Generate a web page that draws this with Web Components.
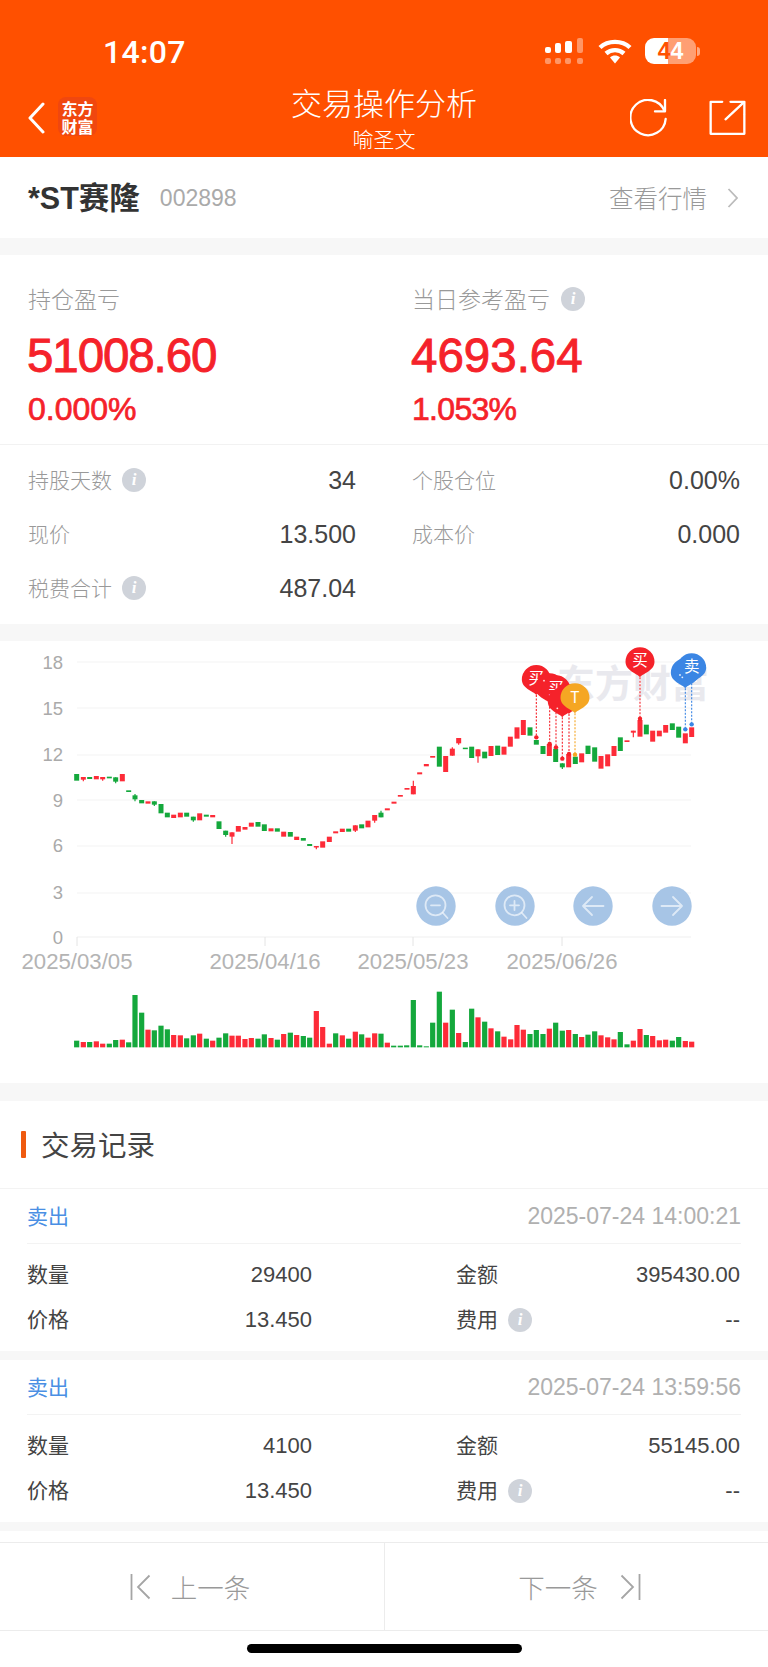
<!DOCTYPE html>
<html lang="zh-CN">
<head>
<meta charset="utf-8">
<title>交易操作分析</title>
<style>
html,body{margin:0;padding:0;background:#f7f7f7}
body{width:768px;height:1667px;overflow:hidden;display:flex;flex-direction:column;font-family:"Liberation Sans","Noto Sans CJK SC",sans-serif;-webkit-font-smoothing:antialiased}
</style>
</head>
<body>
<app-header></app-header>
<stock-row name="*ST赛隆" code="002898" link="查看行情"></stock-row>
<pnl-card></pnl-card>
<kline-chart></kline-chart>
<record-title>交易记录</record-title>
<trade-record side="卖出" time="2025-07-24 14:00:21" qty="29400" amount="395430.00" price="13.450" fee="--"></trade-record>
<trade-record side="卖出" time="2025-07-24 13:59:56" qty="4100" amount="55145.00" price="13.450" fee="--"></trade-record>
<spacer-white></spacer-white>
<pager-bar></pager-bar>
<home-bar></home-bar>

<script>
const FONT='"Liberation Sans","Noto Sans CJK SC",sans-serif';
function def(name,html,init){
  customElements.define(name,class extends HTMLElement{
    constructor(){super();this.attachShadow({mode:'open'});}
    connectedCallback(){
      this.shadowRoot.innerHTML=typeof html==='function'?html(this):html;
      if(init)init(this);
    }
  });
}

def('info-dot',`<style>
:host{display:inline-flex;width:24px;height:24px;border-radius:50%;background:#cfd3da;align-items:center;justify-content:center;flex:none}
span{color:#fff;font:italic 700 17px/24px "Liberation Serif",serif}
</style><span>i</span>`);

def('app-header',`<style>
:host{display:block;height:157px;background:#ff5000;color:#fff;box-sizing:border-box;flex:none}
.status{height:85px;display:flex;align-items:flex-start;padding:0 68px 0 103px;justify-content:space-between}
.time{font:500 32px/34px Roboto,"Liberation Sans",sans-serif;margin-top:35px;letter-spacing:.3px}
.ind{display:flex;align-items:flex-start;margin-top:38px}
.sig{width:38px;height:26px;display:block;margin-right:15px}
.wifi{width:34px;height:26px;display:block;margin-right:13px}
.bat{display:flex;align-items:center}
.cell{width:51px;height:26px;border-radius:9px;background:linear-gradient(90deg,#fff 0 23px,rgba(255,255,255,.45) 23px);display:flex;justify-content:center;align-items:center;font:700 23px/26px "Liberation Sans",sans-serif}
.d1{color:#ff5000}.d2{color:#fff}
.nub{width:3px;height:9px;background:rgba(255,255,255,.5);border-radius:0 3px 3px 0;margin-left:1px}
.nav{height:72px;display:grid;grid-template-columns:1fr auto 1fr}
.left{display:flex;align-items:flex-start;padding-left:27px}
.back{width:18px;height:32px;margin-top:17px;display:block}
.logo{margin:12px 0 0 13px;width:39px;height:39px;background:#f0470f;border-radius:8px;font:700 16px/18px "Noto Sans CJK SC",sans-serif;text-align:center;padding-top:2px;box-sizing:border-box}
.mid{text-align:center}
.t{font:300 31px/36px "Noto Sans CJK SC",sans-serif;margin-top:-1px}
.s{font:300 21px/26px "Noto Sans CJK SC",sans-serif;margin-top:5px}
.right{display:flex;justify-content:flex-end;align-items:flex-start;padding-right:22px;padding-top:14px}
.refresh{width:37px;height:39px;display:block;margin-right:42px}
.share{width:37px;height:36px;display:block;margin-top:1px}
</style>
<div class="status">
  <div class="time">14:07</div>
  <div class="ind">
    <svg class="sig" viewBox="0 0 38 26"><g fill="#fff"><rect x="0" y="9" width="6" height="6" rx="2"/><rect x="10" y="5" width="6" height="10" rx="2"/><rect x="20" y="3" width="7" height="12" rx="2"/></g><rect x="32" y="0" width="6" height="15" rx="2" fill="#fff" fill-opacity=".4"/><g fill="#fff" fill-opacity=".4"><rect x="0" y="20" width="6" height="6" rx="2"/><rect x="10" y="20" width="6" height="6" rx="2"/><rect x="20" y="20" width="6" height="6" rx="2"/><rect x="32" y="20" width="6" height="6" rx="2"/></g></svg>
    <svg class="wifi" viewBox="0 0 34 26"><g fill="none" stroke="#fff" stroke-width="4.4"><path d="M2 9.5C10 2 24 2 32 9.5"/><path d="M8 15.5C13 11 21 11 26 15.5"/></g><path d="M12 19.4C15 17 19 17 22 19.4L17 25.5Z" fill="#fff"/></svg>
    <div class="bat"><div class="cell"><span class="d1">4</span><span class="d2">4</span></div><div class="nub"></div></div>
  </div>
</div>
<div class="nav">
  <div class="left">
    <svg class="back" viewBox="0 0 18 32"><path d="M16 2L3 16L16 30" fill="none" stroke="#fff" stroke-width="3" stroke-linecap="round" stroke-linejoin="round"/></svg>
    <div class="logo">东方<br>财富</div>
  </div>
  <div class="mid"><div class="t">交易操作分析</div><div class="s">喻圣文</div></div>
  <div class="right">
    <svg class="refresh" viewBox="30 27 111 117"><g fill="none" stroke="#fff" stroke-width="7" stroke-linecap="round" stroke-linejoin="round"><path d="M137 87A53 53 0 1 1 133 62"/><path d="M135 30V64H105"/></g></svg>
    <svg class="share" viewBox="265 30 112 108"><g fill="none" stroke="#fff" stroke-width="7" stroke-linecap="round" stroke-linejoin="round"><path d="M305 35H270V132H372V75"/><path d="M315 88L371 36"/><path d="M330 35H372V72"/></g></svg>
  </div>
</div>`);

def('stock-row',h=>`<style>
:host{display:flex;height:81px;background:#fff;align-items:center;padding:0 30px 0 28px;flex:none;box-sizing:border-box}
.n{font:700 30.500px/40px ${FONT};color:#333}
.c{font:400 23px/40px ${FONT};color:#aaa;margin-left:20px}
.sp{flex:1}
.l{font:300 24.500px/40px "Noto Sans CJK SC",sans-serif;color:#999}
svg{width:11px;height:20px;margin-left:20px;display:block}
</style><span class="n">${h.getAttribute('name')}</span><span class="c">${h.getAttribute('code')}</span><span class="sp"></span><span class="l">${h.getAttribute('link')}</span><svg viewBox="0 0 11 20"><path d="M1.500 1L10 10L1.500 19" fill="none" stroke="#bbb" stroke-width="1.800"/></svg>`);

def('pnl-metric',h=>`<style>
:host{display:block}
.lb{display:flex;align-items:center;gap:11px;height:28px;font:300 23px/28px "Noto Sans CJK SC",sans-serif;color:#999}
.lb span{margin-top:-3px}
.v{font:400 47.500px/50px ${FONT};-webkit-text-stroke:.9px #f5222a;color:#f5222a;margin-top:18px;margin-left:-1px;letter-spacing:${h.getAttribute('ls')||0}px}
.p{font:400 32px/36px ${FONT};-webkit-text-stroke:.7px #f5222a;color:#f5222a;margin-top:10px;letter-spacing:${h.getAttribute('pls')||0}px}
</style><div class="lb"><span>${h.getAttribute('label')}</span>${h.hasAttribute('info')?'<info-dot></info-dot>':''}</div><div class="v">${h.getAttribute('value')}</div><div class="p">${h.getAttribute('pct')}</div>`);

def('kv-row',h=>`<style>
:host{display:flex;align-items:center;height:54px}
.k{font:300 21px/28px "Noto Sans CJK SC",sans-serif;color:#999;margin-top:-2px}
info-dot{margin-left:10px}
.sp{flex:1}
.v{font:400 25px/28px ${FONT};color:#444}
</style><span class="k">${h.getAttribute('k')}</span>${h.hasAttribute('info')?'<info-dot></info-dot>':''}<span class="sp"></span><span class="v">${h.getAttribute('v')||''}</span>`);

def('pnl-card',`<style>
:host{display:block;background:#fff;margin-top:17px;height:369px;flex:none}
.top{display:grid;grid-template-columns:328px 328px;column-gap:56px;padding:30px 28px 18px;height:190px;box-sizing:border-box;border-bottom:1px solid #f2f2f2}
.rows{display:grid;grid-template-columns:328px 328px;column-gap:56px;padding:8px 28px;grid-auto-rows:54px}
</style>
<div class="top">
  <pnl-metric label="持仓盈亏" value="51008.60" pct="0.000%" ls="-1.1"></pnl-metric>
  <pnl-metric label="当日参考盈亏" value="4693.64" pct="1.053%" pls="-.7" info></pnl-metric>
</div>
<div class="rows">
  <kv-row k="持股天数" v="34" info></kv-row><kv-row k="个股仓位" v="0.00%"></kv-row>
  <kv-row k="现价" v="13.500"></kv-row><kv-row k="成本价" v="0.000"></kv-row>
  <kv-row k="税费合计" v="487.04" info></kv-row><span></span>
</div>`);

const R='#fd2b38',G='#14a83c';
/* [x, top, bottom, colour, wickTop, wickBottom] in 3x crop units */
const candles=[
[230,402,422,G],[250,411,419,R,0,424],[269,411,417,G],[289,408,418,R],[308,411,418,R,0,422],[328,410,415,G],[347,412,425,G,0,430],[367,402,424,R],
[386,451,456,G],[405,466,478,G,462,484],[425,480,490,G],[444,484,491,R],[463,484,494,G,0,498],[483,492,520,G],[502,518,532,G],[521,524,534,R],[541,518,532,R],[560,518,530,G],[580,530,541,G,0,545],[599,520,541,R],[619,524,530,G],[638,525,532,R],
[657,544,567,G],[677,572,585,G,0,590],[696,577,590,R,0,612],[715,558,575,R],[735,561,569,R],[754,548,560,R],[774,546,560,G],[793,553,573,G],[813,565,574,R],[832,565,575,G],[851,575,590,R],[871,576,590,G],[890,590,600,R],[910,594,602,G],[929,612,618,G],[949,618,622,R,0,628],[968,604,623,R],[988,590,606,R],[1007,574,580,R],[1027,566,576,R],[1046,566,575,G],[1066,556,572,R,0,576],[1085,553,565,G],[1104,542,562,R],[1124,525,542,R,0,548],[1143,518,532,G,512],
[1162,505,511,R],[1182,485,491,R],[1201,465,470,R],[1221,444,449,R],[1240,438,463,R,422],[1259,397,403,R],[1279,372,379,R],[1298,348,353,R],[1318,320,380,G],[1337,348,396,R],[1357,326,347,R,322],[1376,294,310,R,0,314],[1396,323,327,G],[1415,320,354,G],[1434,328,349,R,0,368],[1454,335,355,G],[1473,318,348,R],[1493,317,345,G],[1512,320,344,R],[1531,290,320,R],[1551,262,296,R],[1570,240,285,R],[1590,262,287,G],[1609,300,314,G],[1629,318,342,G],[1648,312,348,R],[1667,326,366,G],[1687,370,382,G,0,387],[1706,342,382,R],[1726,350,372,G],[1745,340,367,R],[1764,317,342,G],[1784,322,365,G],[1803,348,386,R],[1823,343,379,R],[1842,318,348,R],[1861,292,333,G],[1881,301,306,R],[1900,272,278,R,0,292],[1920,240,290,R],[1939,254,283,G],[1958,272,305,R],[1978,272,289,R],[1997,255,278,R],[2017,250,270,G],[2036,260,293,G],[2056,280,310,R],[2075,262,291,R]];
const vols=[[230,242,G],[250,246,R],[269,246,G],[289,244,R],[308,251,R],[328,251,G],[347,240,G],[367,239,R],[386,247,G],[405,105,G],[425,158,G],[444,209,R],[463,211,G],[483,197,G],[502,208,G],[521,225,R],[541,226,R],[560,235,G],[580,226,G],[599,221,R],[619,236,G],[638,242,R],[657,233,G],[677,220,G],[696,227,R],[715,227,R],[735,237,R],[754,234,R],[774,236,G],[793,223,G],[813,234,R],[832,239,G],[851,222,R],[871,218,G],[890,225,R],[910,228,G],[929,233,G],[949,153,R],[968,201,R],[988,251,R],[1007,220,G],[1027,226,R],[1046,236,G],[1066,215,R],[1085,223,G],[1104,233,R],[1124,220,R],[1143,221,G],
[1162,248,R],[1181,257,G],[1201,257,G],[1220,256,G],[1240,120,G],[1259,256,G],[1279,259,G],[1298,188,G],[1318,95,G],[1337,188,R],[1357,149,G],[1376,219,R],[1396,246,G],[1415,146,G],[1434,172,R],[1454,185,G],[1473,205,R],[1493,214,G],[1512,230,R],[1532,238,R],[1551,195,R],[1570,209,R],[1590,222,G],[1609,210,G],[1629,222,G],[1648,206,R],[1667,188,G],[1687,212,G],[1706,210,R],[1726,222,G],[1745,231,R],[1764,224,G],[1784,214,G],[1803,226,R],[1823,232,R],[1842,238,R],[1861,216,G],[1881,253,G],[1900,242,R],[1920,207,R],[1939,225,G],[1958,228,R],[1978,241,R],[1997,239,R],[2017,242,G],[2036,231,G],[2056,243,R],[2075,245,R]];
const PR='#f5222a',PB='#3b86e4',PO='#f5a623';
/* pin: x, tip y, marker y, colour, label (hidden labels are left out) */
const pins=[[1609,165,292,PR,'买'],[1649,190,312,PR,''],[1668,196,322,PR,'买'],[1707,222,342,PR,''],[1687,232,356,PR,''],[1725,220,344,PO,'T'],[1920,112,236,PR,'买'],[2056,145,268,PB,''],[2075,130,253,PB,'卖']];
const flecks=[[1632,122],[1672,205],[2040,105],[2047,112]];
function Y(z){return +(640+z/3).toFixed(2)}
function X(z){return +(z/3).toFixed(2)}
function chartSvg(){
  let s='';
  [662,708,755,800,846,893].forEach(y=>s+=`<line x1="77" x2="691" y1="${y}" y2="${y}" stroke="#f4f4f4" stroke-width="1.200"/>`);
  s+=`<line x1="77" x2="691" y1="937" y2="937" stroke="#efefef" stroke-width="1.200"/>`;
  [77,265,413,562].forEach(x=>s+=`<line x1="${x}" x2="${x}" y1="937" y2="946" stroke="#e4e4e4"/>`);
  [['18',662],['15',708],['12',754],['9',800],['6',845],['3',892],['0',937]].forEach(([t,y])=>s+=`<text x="63" y="${y+6.500}" text-anchor="end" class="ax">${t}</text>`);
  [['2025/03/05',77],['2025/04/16',265],['2025/05/23',413],['2025/06/26',562]].forEach(([t,x])=>s+=`<text x="${x}" y="969" text-anchor="middle" class="dt">${t}</text>`);
  s+=`<text x="557" y="697" class="wm">东方财富</text>`;
  candles.forEach(([x,t,b,c,wt,wb])=>{
    const px=X(x);
    if(wt||wb)s+=`<line x1="${px}" x2="${px}" y1="${Y(wt||t)}" y2="${Y(wb||b)}" stroke="${c}" stroke-width="1.200"/>`;
    s+=`<rect x="${px-2.500}" y="${Y(t)}" width="5" height="${Math.max(1.500,(b-t)/3).toFixed(2)}" fill="${c}"/>`;
  });
  vols.forEach(([x,t,c])=>s+=`<rect x="${X(x)-2.600}" y="${+(960+t/3).toFixed(2)}" width="5.200" height="${+((262-t)/3).toFixed(2)}" fill="${c}"/>`);
  pins.forEach(([x,tip,end,col])=>{
    s+=`<line x1="${X(x)}" x2="${X(x)}" y1="${Y(tip)}" y2="${Y(end)}" stroke="${col}" stroke-width="1.100" stroke-dasharray="2 1.500"/><circle cx="${X(x)}" cy="${Y(end)}" r="2.200" fill="${col}"/>`;
  });
  pins.forEach(([x,tip,end,col,lb])=>{
    const cx=X(x),ty=Y(tip),cy=ty-15.500,r=14.500;
    s+=`<path d="M${cx} ${ty}C${cx-3} ${ty-4} ${cx-r} ${cy+9} ${cx-r} ${cy}A${r} ${r} 0 1 1 ${cx+r} ${cy}C${cx+r} ${cy+9} ${cx+3} ${ty-4} ${cx} ${ty}Z" fill="${col}"/>`;
    if(lb)s+=`<text x="${cx}" y="${cy+(lb==='T'?5.500:4.500)}" text-anchor="middle" class="pn">${lb}</text>`;
  });
  flecks.forEach(([x,y])=>s+=`<circle cx="${X(x)}" cy="${Y(y)}" r=".9" fill="#fff" fill-opacity=".85"/>`);
  const btn=(cx,ic)=>`<circle cx="${cx}" cy="906" r="19.700" fill="#a7c5e6"/><g fill="none" stroke="#fff" stroke-opacity=".62" stroke-width="1.800" stroke-linecap="round" stroke-linejoin="round">${ic}</g>`;
  s+=btn(436,`<circle cx="435.500" cy="905.300" r="10"/><path d="M431 905.300H440M443 913L447.500 918"/>`);
  s+=btn(515,`<circle cx="514.500" cy="905.300" r="10"/><path d="M510 905.300H519M514.500 901V910M522 913L526.500 918"/>`);
  s+=btn(593,`<path d="M603.500 906H583M592 897L583 906L592 915"/>`);
  s+=btn(672,`<path d="M661.500 906H682M673 897L682 906L673 915"/>`);
  return s;
}
def('kline-chart',`<style>
:host{display:block;background:#fff;margin-top:17px;height:442px;flex:none}
svg{display:block;width:768px;height:442px}
.ax{font:400 18.500px "Liberation Sans",sans-serif;fill:#aaa}
.dt{font:400 22.200px "Liberation Sans",sans-serif;fill:#b4b4b4}
.wm{font:700 38px "Noto Sans CJK SC",sans-serif;fill:#e9e9ee}
.pn{font:400 15.500px "Noto Sans CJK SC",sans-serif;fill:#fff}
</style><svg viewBox="0 641 768 442">${chartSvg()}</svg>`);

def('record-title',`<style>
:host{display:flex;align-items:center;height:88px;background:#fff;margin-top:18px;flex:none;box-sizing:border-box;border-bottom:1px solid #f3f3f3;padding:0 0 0 21px}
i{width:5px;height:27px;background:#ef5a0f;border-radius:1px;margin:-1px 15px 0 0}
span{font:400 28.500px/40px "Noto Sans CJK SC",sans-serif;color:#444;margin-top:-2px}
</style><i></i><span><slot></slot></span>`);

def('trade-record',h=>`<style>
:host{display:block;background:#fff;flex:none;margin-bottom:9px;height:162px;box-sizing:border-box}
.head{height:54px;margin:0 27px;display:flex;align-items:center;justify-content:space-between;border-bottom:1px solid #f3f3f3}
.side{font:400 21px/28px "Noto Sans CJK SC",sans-serif;color:#4a8fe4;margin-top:-3px}
.time{font:400 23px/28px "Liberation Sans",sans-serif;color:#b0b0b0}
.grid{display:grid;grid-template-columns:285px 284px;column-gap:144px;padding:8px 27px;grid-auto-rows:45px}
.c{display:flex;align-items:center}
.k{font:400 21px/28px "Noto Sans CJK SC",sans-serif;color:#444;margin-top:-3px}
.v{margin-left:auto;font:400 22px/28px "Liberation Sans",sans-serif;color:#444}
info-dot{margin-left:10px}
</style>
<div class="head"><span class="side">${h.getAttribute('side')}</span><span class="time">${h.getAttribute('time')}</span></div>
<div class="grid">
  <div class="c"><span class="k">数量</span><span class="v">${h.getAttribute('qty')}</span></div>
  <div class="c"><span class="k">金额</span><span class="v">${h.getAttribute('amount')}</span></div>
  <div class="c"><span class="k">价格</span><span class="v">${h.getAttribute('price')}</span></div>
  <div class="c"><span class="k">费用</span><info-dot></info-dot><span class="v">${h.getAttribute('fee')}</span></div>
</div>`);

def('spacer-white',`<style>:host{display:block;height:11px;background:#fff;flex:none}</style>`);

def('pager-bar',`<style>
:host{display:grid;grid-template-columns:385px 1fr;height:89px;background:#fff;border-top:1px solid #ececec;border-bottom:1px solid #ececec;box-sizing:border-box;flex:none}
.b{display:flex;align-items:center;justify-content:center;font:300 26.500px/36px "Noto Sans CJK SC",sans-serif;color:#999}
.prev{border-right:1px solid #ececec;padding-right:4px}
.next{padding-left:6px}
svg{width:21px;height:26px;display:block}
.prev svg{margin-right:20px}
.next svg{margin-left:22px}
</style>
<div class="b prev"><svg viewBox="0 0 21 26"><path d="M1.500 0V26M19.500 1.500L8 13L19.500 24.500" fill="none" stroke="#a5a5a5" stroke-width="1.800"/></svg><span>上一条</span></div>
<div class="b next"><span>下一条</span><svg viewBox="0 0 21 26"><path d="M19.500 0V26M1.500 1.500L13 13L1.500 24.500" fill="none" stroke="#a5a5a5" stroke-width="1.800"/></svg></div>`);

def('home-bar',`<style>
:host{display:flex;height:38px;background:#fff;justify-content:center;flex:none;padding-top:13px;box-sizing:border-box}
i{display:block;width:275px;height:9px;background:#000;border-radius:5px}
</style><i></i>`);
</script>
</body>
</html>
